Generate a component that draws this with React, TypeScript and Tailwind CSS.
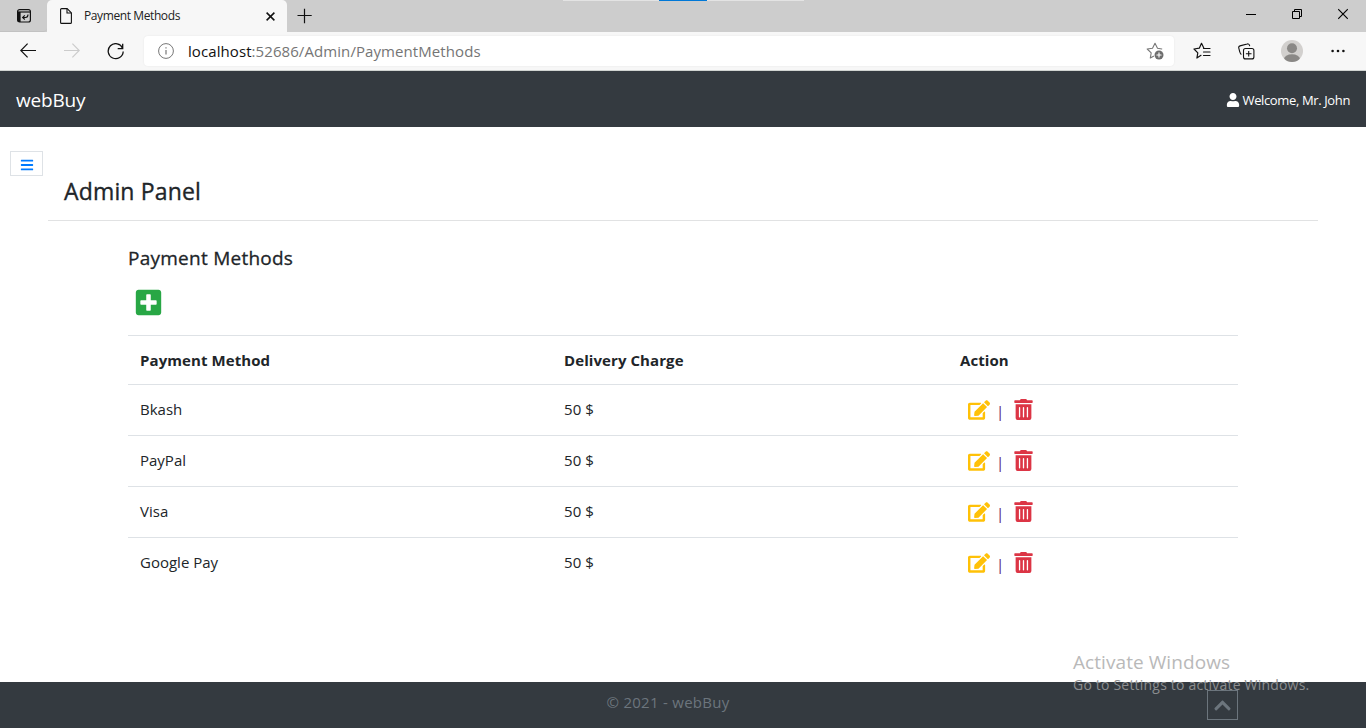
import React from 'react';
import { FaBars, FaChevronUp, FaEdit, FaPlusSquare, FaTrashAlt, FaUser } from 'react-icons/fa';

const methods = [
  { name: 'Bkash', charge: 50 },
  { name: 'PayPal', charge: 50 },
  { name: 'Visa', charge: 50 },
  { name: 'Google Pay', charge: 50 },
];

function TabStrip() {
  return (
    <div className="relative flex h-8 items-start bg-[#cdcdcd]">
      <div className="absolute left-[563px] top-0 flex h-px w-[241px] bg-[#e3e3e3]">
        <div className="ml-24 h-px w-12 bg-[#0078d7]" />
      </div>
      <div className="flex h-8 w-[47px] items-center rounded-br-[4px] border-b border-[#c2c2c2] pl-[17px]">
        <svg width="14" height="14" viewBox="0 0 14 14" fill="none" stroke="#111">
          <rect x="0.6" y="0.6" width="12.8" height="12.4" rx="2" strokeWidth="1.2" />
          <path d="M1 3h12" strokeWidth="1.2" />
          <path d="M2.2 3v10" strokeWidth="2.8" />
          <path d="M11 5.500c0 2-.7 3-2.500 3H5.800M7.800 6.300 5.600 8.500l2.200 2" strokeWidth="1.100" />
        </svg>
      </div>
      <div className="flex h-8 w-60 items-center rounded-t-[5px] bg-[#f7f7f7] pl-[13px] pr-[12px]">
        <svg width="12" height="16" viewBox="0 0 12 16" fill="none" stroke="#111" strokeWidth="1.100">
          <path d="M1.600.600h5.600l4.200 4.200v9.600c0 .6-.4 1-1 1H1.600c-.6 0-1-.4-1-1V1.600c0-.6.400-1 1-1z" strokeLinejoin="round" />
          <path d="M7 .8v4.200h4.200" />
        </svg>
        <span className="ml-[12px] grow whitespace-nowrap text-[12px] leading-4 tracking-[-0.4px] text-[#222]">Payment Methods</span>
        <svg width="9" height="9" viewBox="0 0 9 9" stroke="#111" strokeWidth="1.500">
          <path d="m.6.600 7.800 7.800M8.400.600.600 8.400" />
        </svg>
      </div>
      <svg className="ml-[10px] mt-[8px]" width="16" height="16" viewBox="0 0 16 16" stroke="#111" strokeWidth="1.200">
        <path d="M7.500.8v14.400M.5 7.500h14.200" />
      </svg>
      <div className="ml-auto mr-[18px] mt-[8px] flex items-center">
        <svg width="10" height="12" viewBox="0 0 10 12" stroke="#000">
          <path d="M0 6.500h10" />
        </svg>
        <svg className="ml-[36px]" width="10" height="12" viewBox="0 0 10 12" fill="none" stroke="#000">
          <path d="M.5 3.500h7v7h-7zM2.500 3.500v-2h7v7h-2" />
        </svg>
        <svg className="ml-[36px]" width="10" height="12" viewBox="0 0 10 12" stroke="#000" strokeWidth="1.100">
          <path d="m.2 1.200 9.600 9.600M9.800 1.200.2 10.800" />
        </svg>
      </div>
    </div>
  );
}

function Star({ children }: { children: React.ReactNode }) {
  return (
    <svg width="18" height="18" viewBox="0 0 18 18" fill="none" stroke="currentColor" strokeWidth="1.100" strokeLinejoin="round" strokeLinecap="round">
      {children}
    </svg>
  );
}

function AddressBar() {
  return (
    <div className="flex h-[39px] items-center border-b border-[#d0d4d2] bg-[#f7f7f7]">
      <svg className="ml-5" width="16" height="16" viewBox="0 0 16 16" fill="none" stroke="#111" strokeWidth="1.200">
        <path d="M16 7.500H.8M7.600.7.8 7.500l6.800 6.800" />
      </svg>
      <svg className="ml-7" width="16" height="16" viewBox="0 0 16 16" fill="none" stroke="#ccc" strokeWidth="1.200">
        <path d="M0 7.500h15.200M8.400.7l6.800 6.800-6.800 6.800" />
      </svg>
      <svg className="ml-[27px]" width="17" height="17" viewBox="0 0 17 17" fill="none" stroke="#111" strokeWidth="1.300">
        <path d="M15.600 5.200A7.500 7.500 0 1 0 16.200 8.500M15.700.8v4.800h-5" />
      </svg>
      <div className="ml-5 flex h-[30px] w-[1030px] items-center rounded bg-white pl-[14px] shadow-[0_0_2px_rgba(0,0,0,0.08)]">
        <svg width="16" height="16" viewBox="0 0 16 16" fill="none" stroke="#777">
          <circle cx="8" cy="8" r="7.400" />
          <path d="M8 7v4.600M8 4.200v1.400" strokeWidth="1.200" />
        </svg>
        <span className="ml-[14px] grow whitespace-nowrap text-[15px] leading-5 tracking-[0.08px] text-[#757575]">
          <span className="text-[#111]">localhost</span>:52686/Admin/PaymentMethods
        </span>
        <span className="mr-[10px] text-[#777]">
          <Star>
            <path d="M7.500 14.200 4.300 16l.9-5.200L1.200 7l5.300-.8L9 1.300l2.500 4.900 4.300.8" />
            <circle cx="13" cy="13" r="4.500" fill="#6e6e6e" stroke="none" />
            <path d="M13 10.900v4.200M10.900 13h4.200" stroke="#fff" />
          </Star>
        </span>
      </div>
      <span className="ml-[19px] text-[#111]">
        <Star>
          <path d="m8 13.300-4.100 2.700.9-5.200L1 7l5.300-.8L8.500 1.300l2.200 4.400M10.500 6.500H17M10.500 10H17M10.500 13.500H17" strokeWidth="1.200" />
        </Star>
      </span>
      <svg className="ml-[27px]" width="17" height="17" viewBox="0 0 17 17" fill="none" stroke="#111" strokeWidth="1.100">
        <rect x="5.500" y="5.500" width="10.400" height="10.400" rx="2" />
        <path d="M10.700 7.900v5.600M7.900 10.700h5.600M3.400 11.500C2.400 11 2.100 10 1.700 8.600L.8 5.100C.5 4 1 3.200 2 2.900L9.200 1c1-.3 1.900.2 2.200 1.200l.3 1" />
      </svg>
      <svg className="ml-[26px]" width="22" height="22" viewBox="0 0 22 22">
        <clipPath id="avatar"><circle cx="11" cy="11" r="11" /></clipPath>
        <circle cx="11" cy="11" r="11" fill="#d2d0ce" />
        <g clipPath="url(#avatar)" fill="#8a8886">
          <circle cx="11" cy="8.300" r="5" />
          <ellipse cx="11" cy="19.300" rx="8" ry="5" />
        </g>
      </svg>
      <svg className="ml-[28px]" width="14" height="4" viewBox="0 0 14 4" fill="#111">
        <circle cx="1.600" cy="2" r="1.300" />
        <circle cx="7" cy="2" r="1.300" />
        <circle cx="12.400" cy="2" r="1.300" />
      </svg>
    </div>
  );
}

export default function App() {
  return (
    <div className="relative flex h-[728px] w-[1366px] flex-col overflow-hidden bg-white font-['Open_Sans','Noto_Sans',sans-serif] text-[#212529]">
      <TabStrip />
      <AddressBar />
      <nav className="flex h-14 items-center justify-between bg-[#343a40] px-4 pt-[2px] text-white">
        <span className="whitespace-nowrap text-[19px] leading-7 tracking-[-0.2px]">webBuy</span>
        <span className="flex items-center gap-[3px] whitespace-nowrap text-[13px] leading-5 tracking-[-0.37px]">
          <FaUser size={14} className="-ml-px" />
          Welcome, Mr. John
        </span>
      </nav>
      <main className="flex grow">
        <button className="ml-[10px] mt-6 flex h-[25px] w-[33px] shrink-0 items-center justify-center border border-[#dee2e6] pt-[3px] text-[#007bff]">
          <FaBars size={14} />
        </button>
        <div className="ml-[5px] w-[1270px]">
          <div className="h-[94px] border-b border-[#e1e2e3] pl-4 pt-[49px]">
            <h3 className="whitespace-nowrap text-[23px] leading-[30px] tracking-[0.16px] [-webkit-text-stroke:0.35px_#212529]">Admin Panel</h3>
          </div>
          <div className="ml-20 w-[1110px] pt-[25px]">
            <h5 className="whitespace-nowrap text-[19px] leading-6 tracking-[0.25px] [-webkit-text-stroke:0.3px_#212529]">Payment Methods</h5>
            <FaPlusSquare className="ml-[6px] mt-[18px] text-[#28a745]" size={29} />
            <table className="mt-[18px] w-full table-fixed border-collapse text-left text-[15px] leading-6">
              <colgroup>
                <col className="w-[424px]" />
                <col className="w-[396px]" />
                <col />
              </colgroup>
              <thead>
                <tr className="h-[49px] border-t border-[#dee2e6] tracking-[0.08px]">
                  <th className="px-3">Payment Method</th>
                  <th className="px-3">Delivery Charge</th>
                  <th className="px-3">Action</th>
                </tr>
              </thead>
              <tbody>
                {methods.map((m) => (
                  <tr key={m.name} className="h-[51px] border-t border-[#dee2e6]">
                    <td className="px-3 pb-[2px]">{m.name}</td>
                    <td className="px-3 pb-[2px] tracking-[0.1px]">{m.charge} $</td>
                    <td className="pb-px pl-5">
                      <div className="flex items-center">
                        <FaEdit className="text-[#ffc107]" size={22} />
                        <span className="ml-[6px] mt-[3px] w-[8px] text-[#56206f]">|</span>
                        <FaTrashAlt className="ml-[9px] text-[#dc3545]" size={21} />
                      </div>
                    </td>
                  </tr>
                ))}
              </tbody>
            </table>
          </div>
        </div>
      </main>
      <footer className="flex h-[46px] shrink-0 justify-center bg-[#343a40] pt-[8px] text-[15px] leading-6 tracking-[0.27px] text-[#6c757d]">
        <span className="mr-[30px]">© 2021 - webBuy</span>
      </footer>
      <button className="absolute left-[1207px] top-[690px] flex h-[30px] w-[31px] items-center justify-center border border-[#6c757d] pr-px text-[#6c757d]">
        <FaChevronUp size={19} />
      </button>
      <div className="absolute left-[1073px] top-[650px] whitespace-nowrap text-[#b9b9b9]">
        <div className="text-[19px] leading-6 tracking-[0.07px]">Activate Windows</div>
        <div className="mt-px text-[14px] leading-5 tracking-[0.2px] text-[#8b8d8f]">Go to Settings to activate Windows.</div>
      </div>
    </div>
  );
}
